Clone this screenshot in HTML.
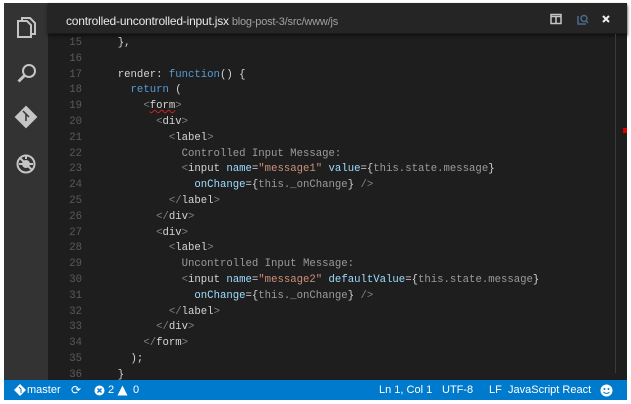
<!DOCTYPE html>
<html><head><meta charset="utf-8"><style>
*{margin:0;padding:0;box-sizing:border-box}
body{width:631px;height:404px;background:#fff;position:relative;overflow:hidden;font-family:"Liberation Sans",sans-serif}
#win{position:absolute;left:4px;top:3px;width:623px;height:397px;background:#1e1e1e}
#act{position:absolute;left:0;top:0;width:44px;height:377px;background:#333}
#title{position:absolute;left:44px;top:0;right:0;height:31px;background:#252526;border-bottom:1px solid #1a1a1a;box-shadow:0 2px 3px #111}
#title .f{position:absolute;left:18px;top:11px;font-size:12px;color:#e8e8e8;letter-spacing:-.2px}
#title .f span{color:#a0a0a0;font-size:11px;margin-left:3px}
#code{position:absolute;left:44px;top:33px;right:0;height:344px;overflow:hidden;font-family:"Liberation Mono",monospace;font-size:10.65px}
.l{height:15.8px;line-height:15.8px;white-space:pre;position:relative}
.n{position:absolute;left:0;width:34px;text-align:right;color:#5a5a5a}
.c{position:absolute;left:57px;color:#d4d4d4}
.k{color:#569cd6}.t{color:#808080}.a{color:#9cdcfe}.s{color:#ce9178}.g{color:#9b9b9b}
#status{position:absolute;left:0;top:377px;width:623px;height:20px;background:#007acc;color:#fff;font-size:11px}
#status span{position:absolute;top:4px}
#sb{position:absolute;left:611px;top:31px;width:1px;height:339px;background:#3a3a3a}
</style></head><body>
<div id="win">
<div id="act">
<svg width="44" height="200" viewBox="0 0 44 200" fill="none" stroke="#c5c5c5" stroke-width="2">
<path d="M14 18h9l4 4v12h-13z"/><path d="M18 18v-3h8l5 5v11h-4"/>
<circle cx="25" cy="68" r="6"/><path d="M20.5 72.5l-6 6" stroke-width="3"/>
<path d="M22 104l10 10-10 10-10-10z" fill="#c5c5c5"/><path d="M19 108l3 3v7M22 111l3 3" stroke="#333" stroke-width="1.5"/>
<circle cx="22" cy="161" r="8.5"/><circle cx="22" cy="161" r="4" fill="#c5c5c5" stroke="none"/><path d="M16 155l12 12M15 161h14M22 153v3"/>
</svg>
</div>
<div id="title"><div class="f">controlled-uncontrolled-input.jsx<span>blog-post-3/src/www/js</span></div>
<svg style="position:absolute;left:502px;top:10px" width="80" height="14" fill="none" stroke-width="1.5">
<rect x="1" y="1.5" width="10" height="9" stroke="#c5c5c5"/><path d="M1 3.5h10M6 3v7" stroke="#c5c5c5"/>
<path d="M28 3v8h8" stroke="#4a6a8a"/><circle cx="34" cy="5.5" r="3" stroke="#4a6a8a"/><path d="M36 8l2 2" stroke="#4a6a8a"/>
<path d="M53 3l6 6M59 3l-6 6" stroke="#eee" stroke-width="2"/>
</svg>
</div>
<div id="code">
<div class="l"><span class="n">15</span><span class="c">  },</span></div>
<div class="l"><span class="n">16</span><span class="c"></span></div>
<div class="l"><span class="n">17</span><span class="c">  render: <span class="k">function</span>() {</span></div>
<div class="l"><span class="n">18</span><span class="c">    <span class="k">return</span> (</span></div>
<div class="l"><span class="n">19</span><span class="c">      <span class="t">&lt;</span><span style="text-decoration:underline wavy #c22;text-decoration-thickness:1px">form</span><span class="t">&gt;</span></span></div>
<div class="l"><span class="n">20</span><span class="c">        <span class="t">&lt;</span>div<span class="t">&gt;</span></span></div>
<div class="l"><span class="n">21</span><span class="c">          <span class="t">&lt;</span>label<span class="t">&gt;</span></span></div>
<div class="l"><span class="n">22</span><span class="c g">            Controlled Input Message:</span></div>
<div class="l"><span class="n">23</span><span class="c">            <span class="t">&lt;</span>input <span class="a">name</span>=<span class="s">"message1"</span> <span class="a">value</span>={<span class="g">this.state.message</span>}</span></div>
<div class="l"><span class="n">24</span><span class="c">              <span class="a">onChange</span>={<span class="g">this._onChange</span>} <span class="t">/&gt;</span></span></div>
<div class="l"><span class="n">25</span><span class="c">          <span class="t">&lt;/</span>label<span class="t">&gt;</span></span></div>
<div class="l"><span class="n">26</span><span class="c">        <span class="t">&lt;/</span>div<span class="t">&gt;</span></span></div>
<div class="l"><span class="n">27</span><span class="c">        <span class="t">&lt;</span>div<span class="t">&gt;</span></span></div>
<div class="l"><span class="n">28</span><span class="c">          <span class="t">&lt;</span>label<span class="t">&gt;</span></span></div>
<div class="l"><span class="n">29</span><span class="c g">            Uncontrolled Input Message:</span></div>
<div class="l"><span class="n">30</span><span class="c">            <span class="t">&lt;</span>input <span class="a">name</span>=<span class="s">"message2"</span> <span class="a">defaultValue</span>={<span class="g">this.state.message</span>}</span></div>
<div class="l"><span class="n">31</span><span class="c">              <span class="a">onChange</span>={<span class="g">this._onChange</span>} <span class="t">/&gt;</span></span></div>
<div class="l"><span class="n">32</span><span class="c">          <span class="t">&lt;/</span>label<span class="t">&gt;</span></span></div>
<div class="l"><span class="n">33</span><span class="c">        <span class="t">&lt;/</span>div<span class="t">&gt;</span></span></div>
<div class="l"><span class="n">34</span><span class="c">      <span class="t">&lt;/</span>form<span class="t">&gt;</span></span></div>
<div class="l"><span class="n">35</span><span class="c">    );</span></div>
<div class="l"><span class="n">36</span><span class="c">  }</span></div>
</div>
<div id="sb"></div>
<div style="position:absolute;left:619px;top:125px;width:4px;height:5px;background:#d00"></div>
<div id="status">
<svg style="position:absolute;left:10px;top:4px" width="12" height="12"><path d="M6 0l6 6-6 6-6-6z" fill="#fff"/><path d="M5 3l2 2v4" stroke="#007acc" fill="none"/></svg>
<span style="left:23px">master</span>
<span style="left:67px;font-size:12px;top:3px">⟳</span>
<svg style="position:absolute;left:90px;top:5px" width="11" height="11"><circle cx="5.5" cy="5.5" r="5" fill="#fff"/><path d="M3.5 3.5l4 4M7.5 3.5l-4 4" stroke="#007acc" stroke-width="1.5"/></svg>
<span style="left:104px">2</span>
<svg style="position:absolute;left:113px;top:5px" width="11" height="11"><path d="M5.5 0.5l5 10h-10z" fill="#fff"/></svg>
<span style="left:129px">0</span>
<span style="left:375px">Ln 1, Col 1</span>
<span style="left:438px">UTF-8</span>
<span style="left:485px">LF</span>
<span style="left:504px">JavaScript React</span>
<svg style="position:absolute;left:596px;top:4px" width="13" height="13"><circle cx="6.5" cy="6.5" r="6" fill="#fff"/><circle cx="4.5" cy="5" r="1" fill="#007acc"/><circle cx="8.5" cy="5" r="1" fill="#007acc"/><path d="M3.5 8q3 3 6 0" stroke="#007acc" fill="none"/></svg>
</div>
</div>
</body></html>
